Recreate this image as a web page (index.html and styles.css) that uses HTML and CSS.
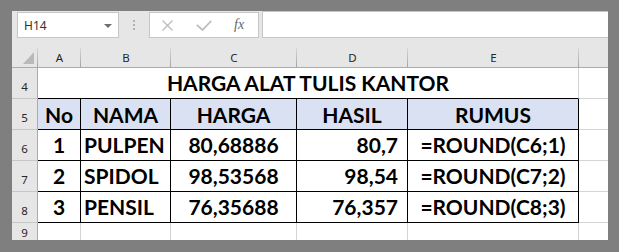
FILE: index.html
```html
<!DOCTYPE html>
<html>
<head>
<meta charset="utf-8">
<link rel="stylesheet" href="styles.css">
</head>
<body>
<div class="window">
  <div class="toolbar">
    <div class="namebox">
      <span>H14</span>
      <svg class="dd" width="8" height="4" viewBox="0 0 8 4"><polygon points="0,0 8,0 4,4" fill="#6f6f6f"/></svg>
    </div>
    <div class="grip"><i></i><i></i><i></i></div>
    <div class="fxbtns">
      <svg class="ico-x" width="11" height="11" viewBox="0 0 11 11"><path d="M0.5 0.5 L10.5 10.5 M10.5 0.5 L0.5 10.5" stroke="#bcbcbc" stroke-width="1.3" fill="none"/></svg>
      <svg class="ico-ok" width="16" height="11" viewBox="0 0 16 11"><polyline points="0.8,4.8 6.5,10 15.2,0.8" stroke="#bcbcbc" stroke-width="1.7" fill="none"/></svg>
      <span class="fx">fx</span>
    </div>
    <div class="fxinput"></div>
  </div>
  <div class="sheet">
    <div class="hc corner"><svg width="11" height="12" viewBox="0 0 11 12"><polygon points="11,0 11,12 0,12" fill="#b9b9b9"/></svg></div>
    <div class="hc">A</div>
    <div class="hc">B</div>
    <div class="hc">C</div>
    <div class="hc">D</div>
    <div class="hc">E</div>
    <div class="hc last"></div>

    <div class="rh">4</div>
    <div class="c title">HARGA ALAT TULIS KANTOR</div>
    <div class="c f"></div>

    <div class="rh">5</div>
    <div class="c t th">No</div>
    <div class="c t th">NAMA</div>
    <div class="c t th">HARGA</div>
    <div class="c t th">HASIL</div>
    <div class="c t th">RUMUS</div>
    <div class="c f"></div>

    <div class="rh">6</div>
    <div class="c t">1</div>
    <div class="c t left">PULPEN</div>
    <div class="c t">80,68886</div>
    <div class="c t right">80,7</div>
    <div class="c t">=ROUND(C6;1)</div>
    <div class="c f"></div>

    <div class="rh">7</div>
    <div class="c t">2</div>
    <div class="c t left">SPIDOL</div>
    <div class="c t">98,53568</div>
    <div class="c t right">98,54</div>
    <div class="c t">=ROUND(C7;2)</div>
    <div class="c f"></div>

    <div class="rh">8</div>
    <div class="c t">3</div>
    <div class="c t left">PENSIL</div>
    <div class="c t">76,35688</div>
    <div class="c t right">76,357</div>
    <div class="c t">=ROUND(C8;3)</div>
    <div class="c f"></div>

    <div class="rh r9">9</div>
    <div class="c r9"></div>
    <div class="c r9"></div>
    <div class="c r9"></div>
    <div class="c r9"></div>
    <div class="c r9"></div>
    <div class="c r9 f"></div>
  </div>
</div>
</body>
</html>
```

FILE: styles.css
```css
* { box-sizing: border-box; }
html, body { margin: 0; padding: 0; }
body {
  background: #7f7f7f;
  width: 619px;
  height: 252px;
  overflow: hidden;
}
.window {
  margin: 11px 0 0 12px;
  width: 596px;
  height: 229px;
  background: #e6e6e6;
  overflow: hidden;
  display: flex;
  flex-direction: column;
}
.toolbar {
  flex: none;
  height: 27px;
  display: flex;
  padding: 1px 0 0 5px;
}
.namebox {
  width: 102px;
  height: 26px;
  background: #fff;
  border: 1px solid #c6c6c6;
  display: flex;
  align-items: center;
  justify-content: space-between;
  padding: 0 6px 0 6px;
  font: 12px "Noto Sans", sans-serif;
  color: #333;
}
.namebox .dd { margin-top: 1px; }
.grip {
  width: 30px;
  height: 26px;
  display: flex;
  flex-direction: column;
  align-items: center;
  justify-content: center;
  gap: 2px;
}
.grip i {
  display: block;
  width: 2px;
  height: 2px;
  background: #b2b2b2;
}
.fxbtns {
  width: 110px;
  height: 26px;
  background: #fff;
  border: 1px solid #c6c6c6;
  display: flex;
  align-items: center;
  padding-left: 12px;
}
.ico-ok { margin-left: 23px; }
.fx {
  margin-left: 22px;
  font: italic 14px "Liberation Serif", serif;
  color: #666;
  margin-top: -1px;
}
.fxinput {
  flex: 1;
  height: 27px;
  margin: -1px 0 0 3px;
  background: #fff;
  border: 1px solid #c6c6c6;
  border-right: none;
}
.sheet {
  flex: 1;
  display: grid;
  grid-template-columns: 26px 43px 90px 126px 111px 171px 29px;
  grid-template-rows: 30px 31px 31px 31px 31px 31px 17px;
  overflow: hidden;
}
.hc {
  background: linear-gradient(#d6d6d6, #a4a4a4) no-repeat right bottom / 1px 19px, #e6e6e6;
  border-bottom: 1px solid #ababab;
  display: flex;
  justify-content: center;
  align-items: flex-end;
  padding-bottom: 2px;
  font: 11.5px/14px "Noto Sans", sans-serif;
  color: #262626;
}
.hc.last { background: #e6e6e6; }
.hc.corner {
  justify-content: flex-end;
  padding: 0 4px 3px 0;
}
.hc.corner svg { display: block; }
.rh {
  background: #e6e6e6;
  border-right: 1px solid #ababab;
  border-bottom: 1px solid #c6c6c6;
  display: flex;
  justify-content: center;
  align-items: flex-end;
  padding-bottom: 4px;
  font: 11.5px/14px "Noto Sans", sans-serif;
  color: #262626;
}
.c {
  background: #fff;
  border-right: 1px solid #d4d4d4;
  border-bottom: 1px solid #d4d4d4;
  display: flex;
  justify-content: center;
  align-items: flex-end;
  padding-bottom: 5px;
  font: 700 21px/21px Lato, "Liberation Sans", sans-serif;
  color: #000;
  white-space: nowrap;
}
.c.title {
  grid-column: span 5;
  border-bottom-color: #000;
}
.c.t {
  border-right-color: #000;
  border-bottom-color: #000;
}
.c.th {
  background: #d9e1f2;
  padding-bottom: 4px;
}
.c.left {
  justify-content: flex-start;
  padding-left: 3px;
}
.c.right {
  justify-content: flex-end;
  padding-right: 9px;
}
.c.f { border-right: none; }
.c.r9 { border-bottom: none; }
.rh.r9 { border-bottom: none; padding-bottom: 0; }
```
